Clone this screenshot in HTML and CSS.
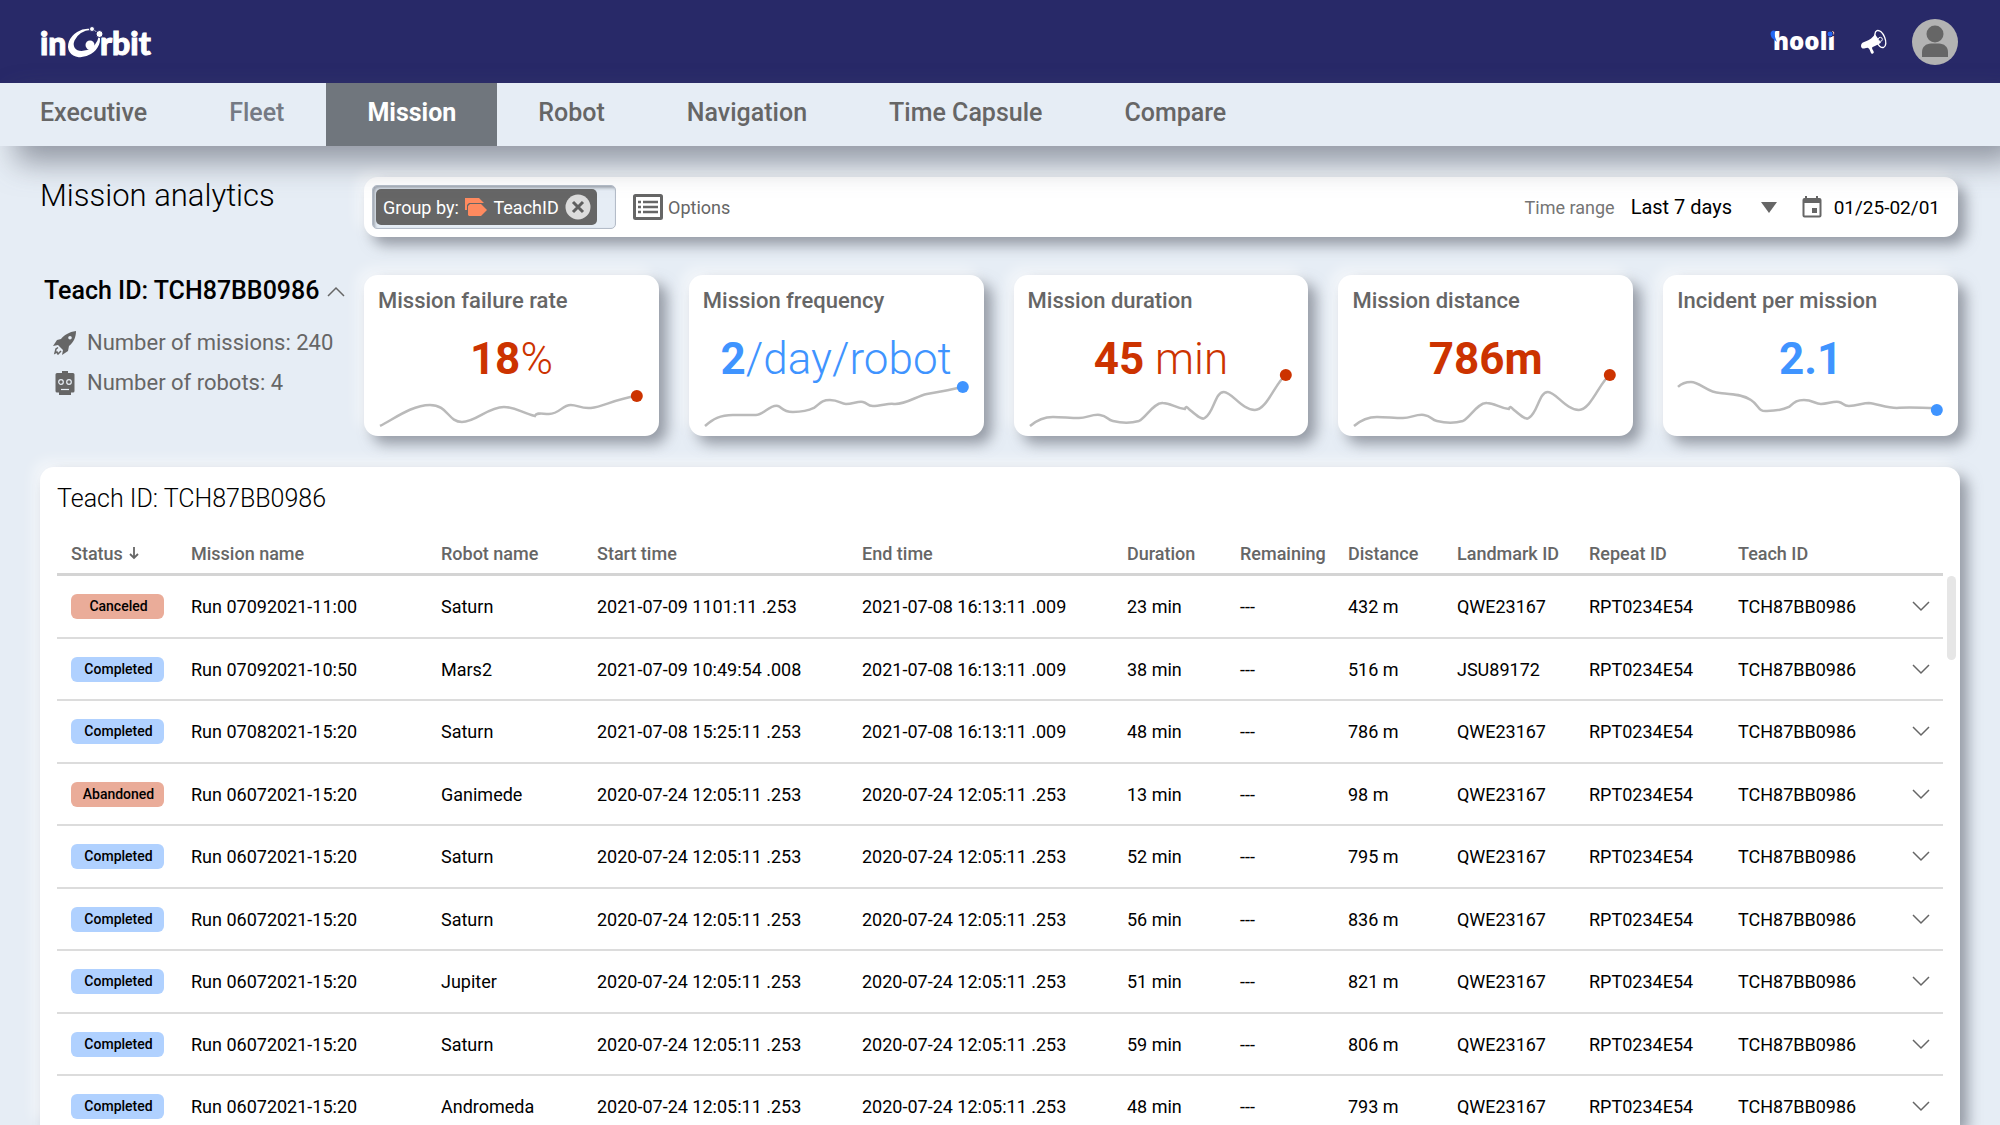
FILE: index.html
```html
<!DOCTYPE html>
<html lang="en">
<head>
<meta charset="utf-8">
<title>Mission analytics</title>
<link rel="stylesheet" href="styles.css">
</head>
<body>
<svg class="symbols" aria-hidden="true">
  <symbol id="chevron" viewBox="0 0 18 11"><path d="M1 1l8 8 8-8" fill="none" stroke="currentColor" stroke-width="1.5"/></symbol>
</svg>

<header class="topbar">
  <a class="logo" href="#" aria-label="inOrbit">
    <svg width="120" height="48" viewBox="0 0 120 48" fill="#fff">
      <text class="logo-text" x="1" y="37">in</text>
      <text class="logo-text" x="61" y="37">rbit</text>
      <ellipse cx="45" cy="25" rx="17" ry="13" transform="rotate(-32 45 25)"/>
      <ellipse cx="47" cy="22.500" rx="13.500" ry="9" transform="rotate(-34 47 22.500)" fill="#282968"/>
      <circle cx="51" cy="27" r="4.500"/>
      <circle cx="60.500" cy="16" r="3.500" stroke="#282968"/>
      <circle cx="53" cy="11" r="2.500" stroke="#282968"/>
    </svg>
  </a>
  <div class="account">
    <a class="brand" href="#" aria-label="hooli">
      <svg width="66" height="36" viewBox="0 0 66 36">
        <text class="brand-text" x="3" y="26" fill="#fff">hooli</text>
        <path d="M6 7C1 5 -1 9 2 14L7 18C5 13 3 9 6 7Z" fill="#2467f5"/>
        <circle cx="60" cy="10" r="3" fill="#2467f5" stroke="#282968"/>
      </svg>
    </a>
    <button class="icon-button" type="button" aria-label="Announcements">
      <svg width="28" height="28" viewBox="0 0 84 84" fill="#fff">
        <path d="M3 53C3 46 10 42 18 40C30 36 38 28 45 19L63 44C54 49 48 53 38 57C35 59 36 62 39 67C42 72 43 75 38 77C32 79 32 68 27 62C23 58 20 60 15 61C7 63 3 59 3 53Z"/>
        <ellipse cx="61" cy="33" rx="14" ry="27" transform="rotate(-22 61 33)" fill="none" stroke="#fff" stroke-width="4"/>
        <circle cx="61" cy="34" r="6" fill="#282968" stroke="#fff" stroke-width="3"/>
      </svg>
    </button>
    <button class="icon-button" type="button" aria-label="Profile">
      <svg width="46" height="46" viewBox="0 0 46 46">
        <circle cx="23" cy="23" r="23" fill="#b3b3b3"/>
        <circle cx="23" cy="15" r="8.500" fill="#666"/>
        <path d="M10 38V33C10 28 14 24.500 19 24.500H27C32 24.500 36 28 36 33V38Z" fill="#666"/>
      </svg>
    </button>
  </div>
</header>

<nav class="tabs">
  <a href="#">Executive</a>
  <a class="muted" href="#">Fleet</a>
  <a class="active" href="#" aria-current="page">Mission</a>
  <a href="#">Robot</a>
  <a href="#">Navigation</a>
  <a href="#">Time Capsule</a>
  <a href="#">Compare</a>
</nav>

<main>
  <div class="overview">
    <h1>Mission analytics</h1>
    <div class="toolbar">
      <div class="filter-box">
        <div class="chip">
          <span>Group by:</span>
          <svg width="22" height="18" viewBox="0 0 22 18" fill="#ff8a5f">
            <path d="M0 0H14L19 5H4L2 7V12H0Z"/>
            <path d="M3 8L5 6H16L22 12L16 18H4L3 17Z"/>
          </svg>
          <span>TeachID</span>
          <button class="icon-button" type="button" aria-label="Remove grouping">
            <svg width="26" height="26" viewBox="0 0 26 26">
              <circle cx="13" cy="13" r="12.500" fill="#dcdcdc"/>
              <path d="M8 8L18 18M18 8L8 18" stroke="#5f5f5f" stroke-width="3"/>
            </svg>
          </button>
        </div>
      </div>
      <button class="options" type="button">
        <svg width="30" height="26" viewBox="0 0 30 26">
          <rect x="1.500" y="1.500" width="27" height="23" rx="1" fill="#fff" stroke="#666" stroke-width="3"/>
          <path d="M5 8H8M5 13H8M5 18H8M10 8H25M10 13H25M10 18H25" stroke="#666" stroke-width="2.500"/>
        </svg>
        Options
      </button>
      <div class="range">
        <label for="range">Time range</label>
        <span class="select">
          <select id="range"><option>Last 7 days</option></select>
          <svg width="16" height="11" viewBox="0 0 16 11" fill="#666"><path d="M0 0H16L8 11Z"/></svg>
        </span>
        <button class="date" type="button">
          <svg width="20" height="22" viewBox="0 0 20 22" fill="#666">
            <path fill-rule="evenodd" d="M3 0H5V2H14V0H16V2H17.500A2 2 0 0 1 19.500 4V19.500A2 2 0 0 1 17.500 21.500H2.500A2 2 0 0 1 .500 19.500V4A2 2 0 0 1 2.500 2H3ZM2.500 7V19.500H17.500V7ZM10 12H15V17H10Z"/>
          </svg>
          01/25-02/01
        </button>
      </div>
    </div>

    <aside class="group">
      <button class="group-name" type="button">Teach ID: TCH87BB0986
        <svg class="flip" width="18" height="11"><use href="#chevron"/></svg>
      </button>
      <ul class="facts">
        <li>
          <svg width="24" height="24" viewBox="0 0 24 24" fill="#666">
            <path fill-rule="evenodd" d="M23 0C16 1 11 4 8 8L4 9L0 15L5 14L10 19L9 24L15 20L16 15C21 11 23 6 23 0ZM17 5A1.800 1.800 0 1 1 17 8.600A1.800 1.800 0 1 1 17 5Z"/>
            <path d="M5 16.500L3 18L2 22L4 21L5 23L8 20" fill="none" stroke="#666" stroke-width="1.500"/>
          </svg>
          Number of missions: 240
        </li>
        <li>
          <svg width="24" height="24" viewBox="0 0 24 24" fill="#666">
            <path d="M9 0H15V2H20A1.500 1.500 0 0 1 21.500 3.500V20A1.500 1.500 0 0 1 20 21.500H18V24H6V21.500H4A1.500 1.500 0 0 1 2.500 20V3.500A1.500 1.500 0 0 1 4 2H9Z"/>
            <g fill="none" stroke="#e6edf5" stroke-width="1.200"><circle cx="8" cy="11" r="2.300"/><circle cx="16" cy="11" r="2.300"/><path d="M8 18.500H16"/></g>
          </svg>
          Number of robots: 4
        </li>
      </ul>
    </aside>

    <div class="cards">
      <section class="card bad">
        <h2>Mission failure rate</h2>
        <p><b>18</b>%</p>
        <svg class="spark" viewBox="0 0 295 161">
          <path d="M16 151C30 144 48 130 66 130C84 130 84 147 98 147C112 147 124 132 140 132C152 132 158 138 171 141C173 137 178 139 185 139C196 139 198 130 207 130C214 130 217 134 227 133C240 132 250 124 273 121"/>
          <circle cx="273" cy="121" r="6"/>
        </svg>
      </section>
      <section class="card good">
        <h2>Mission frequency</h2>
        <p><b>2</b>/day/robot</p>
        <svg class="spark" viewBox="0 0 295 161">
          <path d="M16 151C24 144 31 140 44 140H67C75 140 81 129 89 131C93 132 93 137 104 137C114 137 121 135 125 133C131 129 132 125 141 125C150 125 152 129 157 129C164 129 169 126 174 127C179 128 178 131 184 131C192 131 200 128 205 129C216 130 228 121 238 119C250 117 262 115 273 112"/>
          <circle cx="274" cy="112" r="6"/>
        </svg>
      </section>
      <section class="card bad">
        <h2>Mission duration</h2>
        <p><b>45</b> min</p>
        <svg class="spark" viewBox="0 0 295 161">
          <path d="M16 151C23 145 29 142 39 142C48 142 56 143 65 143C73 143 78 139 86 140C94 141 93 145 99 146C107 148 118 148 125 146C132 143 140 127 149 128C157 128 161 133 171 134C172 131 173 132 175 134C181 139 188 146 191 143C200 138 201 117 210 117C218 117 228 135 241 135C253 135 262 107 272 100"/>
          <circle cx="272" cy="100" r="6"/>
        </svg>
      </section>
      <section class="card bad">
        <h2>Mission distance</h2>
        <p><b>786m</b></p>
        <svg class="spark" viewBox="0 0 295 161">
          <path d="M16 151C23 145 29 142 39 142C48 142 56 143 65 143C73 143 78 139 86 140C94 141 93 145 99 146C107 148 118 148 125 146C132 143 140 127 149 128C157 128 161 133 171 134C172 131 173 132 175 134C181 139 188 146 191 143C200 138 201 117 210 117C218 117 228 135 241 135C253 135 262 107 272 100"/>
          <circle cx="272" cy="100" r="6"/>
        </svg>
      </section>
      <section class="card good">
        <h2>Incident per mission</h2>
        <p><b>2.1</b></p>
        <svg class="spark" viewBox="0 0 295 161">
          <path d="M15 112C19 108 23 107 28 107C37 107 45 118 57 118C67 119 79 119 88 125C96 130 95 137 104 136C112 136 120 135 126 132C132 127 134 125 141 125C150 125 152 129 158 129C165 129 170 126 176 127C181 128 180 131 186 131C194 131 200 128 206 128C215 129 224 133 234 133C245 132 260 133 272 133"/>
          <circle cx="274" cy="135" r="6"/>
        </svg>
      </section>
    </div>
  </div>

  <section class="panel">
    <h2>Teach ID: TCH87BB0986</h2>
    <div class="table-area">
      <table>
        <colgroup>
          <col class="c-status"><col class="c-mission"><col class="c-robot"><col class="c-time"><col class="c-time">
          <col class="c-duration"><col class="c-remaining"><col class="c-distance"><col class="c-landmark">
          <col class="c-id"><col class="c-id"><col class="c-more">
        </colgroup>
        <thead>
          <tr>
            <th>Status <svg width="10" height="13" viewBox="0 0 10 13" fill="none" stroke="#666" stroke-width="1.800"><path d="M5 0V11M1 7L5 11L9 7"/></svg></th>
            <th>Mission name</th><th>Robot name</th><th>Start time</th><th>End time</th><th>Duration</th>
            <th>Remaining</th><th>Distance</th><th>Landmark ID</th><th>Repeat ID</th><th>Teach ID</th><th></th>
          </tr>
        </thead>
        <tbody>
          <tr><td><span class="badge stopped">Canceled</span></td><td>Run 07092021-11:00</td><td>Saturn</td><td>2021-07-09 1101:11 .253</td><td>2021-07-08 16:13:11 .009</td><td>23 min</td><td>---</td><td>432 m</td><td>QWE23167</td><td>RPT0234E54</td><td>TCH87BB0986</td><td><button class="icon-button" type="button" aria-label="Expand"><svg width="18" height="11"><use href="#chevron"/></svg></button></td></tr>
          <tr><td><span class="badge">Completed</span></td><td>Run 07092021-10:50</td><td>Mars2</td><td>2021-07-09 10:49:54 .008</td><td>2021-07-08 16:13:11 .009</td><td>38 min</td><td>---</td><td>516 m</td><td>JSU89172</td><td>RPT0234E54</td><td>TCH87BB0986</td><td><button class="icon-button" type="button" aria-label="Expand"><svg width="18" height="11"><use href="#chevron"/></svg></button></td></tr>
          <tr><td><span class="badge">Completed</span></td><td>Run 07082021-15:20</td><td>Saturn</td><td>2021-07-08 15:25:11 .253</td><td>2021-07-08 16:13:11 .009</td><td>48 min</td><td>---</td><td>786 m</td><td>QWE23167</td><td>RPT0234E54</td><td>TCH87BB0986</td><td><button class="icon-button" type="button" aria-label="Expand"><svg width="18" height="11"><use href="#chevron"/></svg></button></td></tr>
          <tr><td><span class="badge stopped">Abandoned</span></td><td>Run 06072021-15:20</td><td>Ganimede</td><td>2020-07-24 12:05:11 .253</td><td>2020-07-24 12:05:11 .253</td><td>13 min</td><td>---</td><td>98 m</td><td>QWE23167</td><td>RPT0234E54</td><td>TCH87BB0986</td><td><button class="icon-button" type="button" aria-label="Expand"><svg width="18" height="11"><use href="#chevron"/></svg></button></td></tr>
          <tr><td><span class="badge">Completed</span></td><td>Run 06072021-15:20</td><td>Saturn</td><td>2020-07-24 12:05:11 .253</td><td>2020-07-24 12:05:11 .253</td><td>52 min</td><td>---</td><td>795 m</td><td>QWE23167</td><td>RPT0234E54</td><td>TCH87BB0986</td><td><button class="icon-button" type="button" aria-label="Expand"><svg width="18" height="11"><use href="#chevron"/></svg></button></td></tr>
          <tr><td><span class="badge">Completed</span></td><td>Run 06072021-15:20</td><td>Saturn</td><td>2020-07-24 12:05:11 .253</td><td>2020-07-24 12:05:11 .253</td><td>56 min</td><td>---</td><td>836 m</td><td>QWE23167</td><td>RPT0234E54</td><td>TCH87BB0986</td><td><button class="icon-button" type="button" aria-label="Expand"><svg width="18" height="11"><use href="#chevron"/></svg></button></td></tr>
          <tr><td><span class="badge">Completed</span></td><td>Run 06072021-15:20</td><td>Jupiter</td><td>2020-07-24 12:05:11 .253</td><td>2020-07-24 12:05:11 .253</td><td>51 min</td><td>---</td><td>821 m</td><td>QWE23167</td><td>RPT0234E54</td><td>TCH87BB0986</td><td><button class="icon-button" type="button" aria-label="Expand"><svg width="18" height="11"><use href="#chevron"/></svg></button></td></tr>
          <tr><td><span class="badge">Completed</span></td><td>Run 06072021-15:20</td><td>Saturn</td><td>2020-07-24 12:05:11 .253</td><td>2020-07-24 12:05:11 .253</td><td>59 min</td><td>---</td><td>806 m</td><td>QWE23167</td><td>RPT0234E54</td><td>TCH87BB0986</td><td><button class="icon-button" type="button" aria-label="Expand"><svg width="18" height="11"><use href="#chevron"/></svg></button></td></tr>
          <tr><td><span class="badge">Completed</span></td><td>Run 06072021-15:20</td><td>Andromeda</td><td>2020-07-24 12:05:11 .253</td><td>2020-07-24 12:05:11 .253</td><td>48 min</td><td>---</td><td>793 m</td><td>QWE23167</td><td>RPT0234E54</td><td>TCH87BB0986</td><td><button class="icon-button" type="button" aria-label="Expand"><svg width="18" height="11"><use href="#chevron"/></svg></button></td></tr>
        </tbody>
      </table>
      <div class="scroll-thumb"></div>
    </div>
  </section>
</main>
</body>
</html>
```
FILE: styles.css
```css
:root {
  --page: #e6edf5;
  --navy: #282968;
  --ink: #000;
  --grey: #666;
  --raised: 8px 8px 14px rgba(95, 100, 112, .6), -6px -6px 14px rgba(255, 255, 255, .6);
}

* { box-sizing: border-box; }

body {
  margin: 0;
  height: 100vh;
  display: flex;
  flex-direction: column;
  overflow: hidden;
  background: var(--page);
  color: var(--ink);
  font-family: Roboto, "Liberation Sans", sans-serif;
  font-size: 18px;
}

h1, h2, p, ul { margin: 0; padding: 0; font-weight: 400; }
svg { display: block; flex: none; }
a { color: inherit; text-decoration: none; }
button, select {
  border: 0;
  padding: 0;
  background: none;
  color: inherit;
  font: inherit;
  cursor: pointer;
}
.symbols { position: absolute; width: 0; height: 0; }
.icon-button { display: block; flex: none; }

.topbar {
  flex: none;
  height: 83px;
  padding: 0 42px 0 39px;
  display: flex;
  align-items: center;
  justify-content: space-between;
  background: var(--navy);
}
.logo-text { font: 900 32px Lato, sans-serif; stroke: #fff; stroke-width: 1px; }
.brand-text { font: 800 24px "Open Sans", sans-serif; }
.account { display: flex; align-items: center; gap: 24px; }

.tabs {
  flex: none;
  position: relative;
  z-index: 1;
  height: 63px;
  display: flex;
  background: var(--page);
  box-shadow: 16px 16px 30px rgba(90, 95, 108, .6);
  font-size: 25px;
  font-weight: 500;
  color: var(--grey);
}
.tabs a { padding: 15px 41px 0; line-height: 30px; }
.tabs a:first-child { padding-left: 40px; }
.tabs .muted { padding-right: 42px; color: #757a84; }
.tabs .active { background: #70767d; color: #fff; font-weight: 700; }

main {
  flex: 1;
  min-height: 0;
  padding: 31px 40px 0;
  display: flex;
  flex-direction: column;
  gap: 31px;
}

.overview {
  display: grid;
  grid-template-columns: 324px 1fr;
  row-gap: 38px;
  padding-right: 2px;
}
h1 { font-size: 31px; font-weight: 300; line-height: 38px; }

.toolbar {
  height: 60px;
  padding: 0 18px 0 8px;
  display: flex;
  align-items: center;
  gap: 17px;
  border-radius: 14px;
  background: #fff;
  box-shadow: var(--raised);
}
.filter-box {
  width: 244px;
  height: 44px;
  padding: 3px;
  border: 1px solid #b4bcc8;
  border-radius: 5px;
  background: var(--page);
  box-shadow: inset 2px 2px 3px rgba(90, 95, 108, .5);
}
.chip {
  width: 221px;
  height: 36px;
  padding: 0 6px 0 7px;
  display: flex;
  align-items: center;
  justify-content: space-between;
  border-radius: 5px;
  background: var(--grey);
  color: #fff;
}
.options { display: flex; align-items: center; gap: 5px; color: var(--grey); }
.range { margin-left: auto; display: flex; align-items: center; gap: 16px; }
.range label { color: #757575; }
.select { display: flex; align-items: center; margin-right: 9px; }
.select select { width: 130px; appearance: none; font-size: 20px; }
.date { display: flex; align-items: center; gap: 12px; font-size: 19px; }

.group { padding-left: 4px; }
.group-name {
  display: flex;
  align-items: center;
  gap: 7px;
  font-size: 25px;
  font-weight: 500;
  line-height: 32px;
}
.group-name svg { color: var(--grey); }
.flip { transform: rotate(180deg); }
.facts {
  margin-top: 16px;
  padding-left: 9px;
  list-style: none;
  color: var(--grey);
  font-size: 22px;
  line-height: 40px;
}
.facts li { display: flex; align-items: center; gap: 10px; }

.cards { display: grid; grid-template-columns: repeat(5, 1fr); gap: 30px; }
.card {
  position: relative;
  height: 161px;
  padding: 12px 14px;
  border-radius: 14px;
  background: #fff;
  box-shadow: var(--raised);
}
.card h2 { color: var(--grey); font-size: 22px; font-weight: 500; line-height: 28px; }
.card p { margin-top: 16px; font-size: 44px; font-weight: 300; line-height: 56px; text-align: center; }
.card b { font-weight: 700; }
.bad { color: #cc3300; }
.good { color: #3f94ff; }
.spark { position: absolute; inset: 0; width: 100%; height: 100%; fill: currentColor; }
.spark path { fill: none; stroke: #bababa; stroke-width: 2.5; }

.panel {
  flex: 1;
  min-height: 0;
  padding: 16px 17px 0;
  border-radius: 14px 14px 0 0;
  background: #fff;
  box-shadow: var(--raised);
}
.panel h2 { font-size: 25px; font-weight: 300; line-height: 32px; }
.table-area { position: relative; margin-top: 18px; }
.scroll-thumb {
  position: absolute;
  top: 43px;
  right: -13px;
  width: 9px;
  height: 84px;
  border-radius: 5px;
  background: #e6e6e6;
}

table { width: 100%; table-layout: fixed; border-collapse: separate; border-spacing: 0; }
th, td { padding: 0; text-align: left; white-space: nowrap; }
th {
  height: 43px;
  border-bottom: 3px solid #d4d4d4;
  color: var(--grey);
  font-weight: 500;
}
th svg { display: inline-block; margin-left: 2px; }
td { height: 63px; border-bottom: 2px solid #dcdcdc; }
tr:nth-child(even) td { height: 62px; }
th:first-child, td:first-child { padding-left: 14px; }
td .icon-button { margin-left: 25px; color: var(--grey); }
.badge {
  display: block;
  width: 93px;
  padding-left: 2px;
  border-radius: 6px;
  background: #b0d1ff;
  font-size: 14px;
  font-weight: 500;
  line-height: 25px;
  text-align: center;
}
.stopped { background: #eaac99; }

.c-status { width: 134px; }
.c-mission { width: 250px; }
.c-robot { width: 156px; }
.c-time { width: 265px; }
.c-duration { width: 113px; }
.c-remaining { width: 108px; }
.c-distance { width: 109px; }
.c-landmark { width: 132px; }
.c-id { width: 149px; }
.c-more { width: 56px; }
```
